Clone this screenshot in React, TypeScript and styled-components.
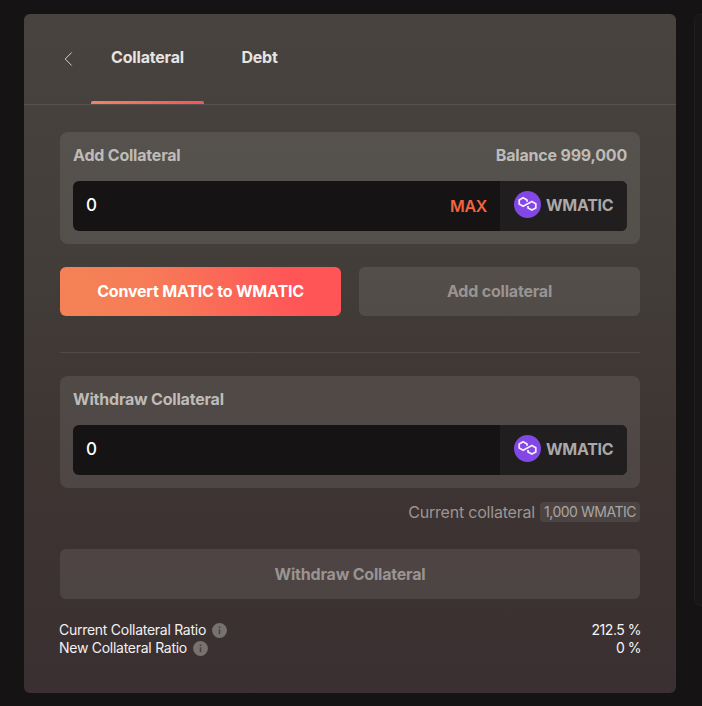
import React from "react";
import styled, { createGlobalStyle, css } from "styled-components";

const GlobalStyle = createGlobalStyle`
  *, *::before, *::after { box-sizing: border-box; }
  html, body { margin: 0; background: #151314; }
  body {
    font-family: Inter, "Liberation Sans", sans-serif;
    letter-spacing: -0.2px;
    color: #fff;
    overflow: hidden;
  }
  button, input { font: inherit; letter-spacing: inherit; border: 0; margin: 0; padding: 0; }
`;

const Page = styled.main`
  display: flex;
  align-items: flex-start;
  gap: 18px;
  width: 702px;
  height: 706px;
  padding: 14px 0 0 24px;
  overflow: hidden;
  background: #151314;
`;

const Panel = styled.section`
  flex: 0 0 652px;
  height: 679px;
  border-radius: 6px;
  background: linear-gradient(180deg, #48433f 0%, #433e3a 35%, #3f3835 54%, #3d3332 73%, #3a3031 100%);
`;

const NextPanel = styled.aside`
  flex: 0 0 300px;
  height: 592px;
  border: 1px solid #211e1e;
  border-radius: 6px;
  background: #181616;
`;

const Header = styled.header`
  display: flex;
  align-items: stretch;
  height: 91px;
  padding-left: 36px;
  border-bottom: 1px solid #57524f;
`;

const BackButton = styled.button`
  display: flex;
  width: 31px;
  padding: 37px 0 0 4px;
  background: transparent;
  color: #d4d0ce;
`;

const Tab = styled.button<{ $active?: boolean; $width: number }>`
  display: flex;
  flex-direction: column;
  justify-content: space-between;
  align-items: center;
  width: ${(p) => p.$width}px;
  padding-top: 33px;
  background: transparent;
  color: #e6e3e1;
  font-size: 16px;
  line-height: 20px;
  font-weight: 700;

  &::after {
    content: "";
    width: 100%;
    height: 3px;
    border-radius: 2px 2px 0 0;
    background: ${(p) => (p.$active ? "linear-gradient(90deg, #ef8560, #f2555d)" : "transparent")};
  }
`;

const Body = styled.div`
  display: flex;
  flex-direction: column;
  padding: 27px 36px 0;
`;

const Field = styled.div`
  height: 112px;
  padding: 13px;
  border-radius: 8px;
  background: rgba(255, 255, 255, 0.09);
`;

const FieldHead = styled.div`
  display: flex;
  justify-content: space-between;
  height: 36px;
  color: #bfbbb8;
  font-size: 16px;
  line-height: 20px;
  font-weight: 700;
`;

const InputRow = styled.div`
  display: flex;
  height: 50px;
  overflow: hidden;
  border-radius: 6px;
  background: #151314;
`;

const Amount = styled.input`
  flex: 1;
  min-width: 0;
  padding: 0 0 2px 13px;
  outline: 0;
  background: transparent;
  color: #fff;
  font-size: 17px;
  font-weight: 500;
`;

const MaxButton = styled.button`
  padding: 0 13px 1px 0;
  background: transparent;
  color: #f26442;
  font-size: 16px;
  font-weight: 600;
  letter-spacing: -0.3px;
`;

const Token = styled.div`
  display: flex;
  align-items: center;
  gap: 5px;
  width: 127px;
  padding-left: 14px;
  background: #201e1f;
  color: #aba9a8;
  font-size: 16px;
  line-height: 20px;
  font-weight: 700;
  letter-spacing: -0.3px;

  svg { flex: none; margin-bottom: 3px; }
  span { margin-bottom: 2px; }
`;

const Actions = styled.div`
  display: grid;
  grid-template-columns: 1fr 1fr;
  gap: 18px;
  margin-top: 23px;
  height: 49px;
`;

const Button = styled.button<{ $primary?: boolean }>`
  padding-bottom: 1px;
  border-radius: 6px;
  font-size: 16px;
  font-weight: 700;
  ${(p) =>
    p.$primary
      ? css`
          background: linear-gradient(70deg, #f48256 8%, #f77b57 35%, #ff5557 82%);
          color: #fff;
        `
      : css`
          background: rgba(255, 255, 255, 0.09);
          color: #999492;
        `}
`;

const WithdrawButton = styled(Button)`
  height: 50px;
  margin-top: 27px;
`;

const Divider = styled.hr`
  width: 100%;
  height: 1px;
  margin: 36px 0 23px;
  border: 0;
  background: #504a47;
`;

const Current = styled.div`
  display: flex;
  justify-content: flex-end;
  align-items: center;
  gap: 5px;
  height: 20px;
  margin-top: 14px;
  color: #9b9593;
  font-size: 16px;
  line-height: 20px;
`;

const Chip = styled.span`
  width: 100px;
  height: 20px;
  border-radius: 4px;
  background: #4b4443;
  color: #aaa5a3;
  font-size: 14px;
  text-align: center;
  letter-spacing: -0.48px;
  white-space: nowrap;
`;

const Ratios = styled.dl`
  margin: 22px -1px 0;
  font-size: 14px;
  line-height: 18px;
  letter-spacing: -0.27px;
`;

const RatioRow = styled.div`
  display: flex;
  justify-content: space-between;

  dt { display: flex; align-items: center; gap: 6px; color: #f2f0f0; }
  dd { margin: 0; color: #f6f4f4; letter-spacing: -0.48px; }
`;

function BackIcon() {
  return (
    <svg width="9" height="16" viewBox="0 0 9 16" fill="none" stroke="currentColor" strokeWidth="1">
      <path d="M7.7 1.5 1.2 8l6.5 6.5" />
    </svg>
  );
}

function PolygonIcon() {
  return (
    <svg width="27" height="27" viewBox="0 0 27 27" fill="none">
      <circle cx="13.5" cy="13.5" r="13.5" fill="#8247e5" />
      <path
        d="M13 10.7V8.9L9.1 6.7 5.2 8.9v4.2l3.9 2.2 8.8-4.8 3.9 2.2v4.2l-3.9 2.2-3.9-2.2v-1.8"
        stroke="#f5edff"
        strokeWidth="1.75"
        strokeLinejoin="round"
      />
    </svg>
  );
}

function InfoIcon() {
  return (
    <svg width="15" height="15" viewBox="0 0 15 15">
      <circle cx="7.5" cy="7.5" r="7.4" fill="#777170" />
      <path d="M7.5 6.3v5M7.5 3.5v1.6" stroke="#494140" strokeWidth="1.5" />
    </svg>
  );
}

function AmountField({ label, balance, max }: { label: string; balance?: string; max?: boolean }) {
  return (
    <Field>
      <FieldHead>
        <span>{label}</span>
        {balance && <span>{balance}</span>}
      </FieldHead>
      <InputRow>
        <Amount defaultValue="0" aria-label={label} />
        {max && <MaxButton>MAX</MaxButton>}
        <Token>
          <PolygonIcon />
          <span>WMATIC</span>
        </Token>
      </InputRow>
    </Field>
  );
}

const ratios = [
  { label: "Current Collateral Ratio", value: "212.5 %" },
  { label: "New Collateral Ratio", value: "0 %" },
];

export default function App() {
  return (
    <>
      <GlobalStyle />
      <Page>
        <Panel>
          <Header>
            <BackButton aria-label="Back">
              <BackIcon />
            </BackButton>
            <Tab $active $width={113}>Collateral</Tab>
            <Tab $width={111}>Debt</Tab>
          </Header>
          <Body>
            <AmountField label="Add Collateral" balance="Balance 999,000" max />
            <Actions>
              <Button $primary>Convert MATIC to WMATIC</Button>
              <Button>Add collateral</Button>
            </Actions>
            <Divider />
            <AmountField label="Withdraw Collateral" />
            <Current>
              <span>Current collateral</span>
              <Chip>1,000 WMATIC</Chip>
            </Current>
            <WithdrawButton>Withdraw Collateral</WithdrawButton>
            <Ratios>
              {ratios.map((r) => (
                <RatioRow key={r.label}>
                  <dt>
                    {r.label}
                    <InfoIcon />
                  </dt>
                  <dd>{r.value}</dd>
                </RatioRow>
              ))}
            </Ratios>
          </Body>
        </Panel>
        <NextPanel />
      </Page>
    </>
  );
}
